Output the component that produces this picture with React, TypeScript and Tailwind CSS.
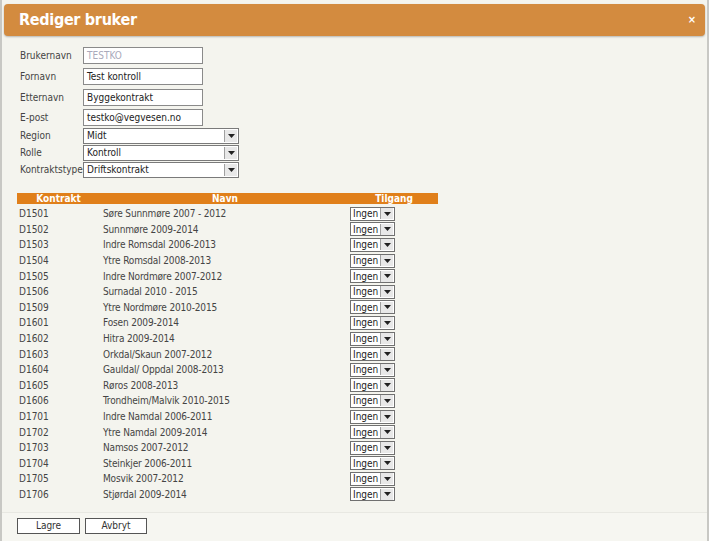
const rows: [string, string][] = [
  ["D1501", "Søre Sunnmøre 2007 - 2012"],
  ["D1502", "Sunnmøre 2009-2014"],
  ["D1503", "Indre Romsdal 2006-2013"],
  ["D1504", "Ytre Romsdal 2008-2013"],
  ["D1505", "Indre Nordmøre 2007-2012"],
  ["D1506", "Surnadal 2010 - 2015"],
  ["D1509", "Ytre Nordmøre 2010-2015"],
  ["D1601", "Fosen 2009-2014"],
  ["D1602", "Hitra 2009-2014"],
  ["D1603", "Orkdal/Skaun 2007-2012"],
  ["D1604", "Gauldal/ Oppdal 2008-2013"],
  ["D1605", "Røros 2008-2013"],
  ["D1606", "Trondheim/Malvik 2010-2015"],
  ["D1701", "Indre Namdal 2006-2011"],
  ["D1702", "Ytre Namdal 2009-2014"],
  ["D1703", "Namsos 2007-2012"],
  ["D1704", "Steinkjer 2006-2011"],
  ["D1705", "Mosvik 2007-2012"],
  ["D1706", "Stjørdal 2009-2014"],
];

const font = { fontFamily: '"DejaVu Sans Condensed", "DejaVu Sans", Verdana, sans-serif' };

function Arrow() {
  return (
    <span className="flex h-full w-[13px] items-center justify-center border-l border-[#a0a0a0] bg-[#e8e8e8]">
      <svg width="7" height="4" viewBox="0 0 7 4">
        <path d="M0 0h7L3.5 4z" fill="#222" />
      </svg>
    </span>
  );
}

function TextField({ value, muted }: { value: string; muted?: boolean }) {
  return (
    <div
      className={`flex h-[17px] w-[120px] items-center border border-[#8a8a8a] bg-white px-[3px] ${
        muted ? "text-[#aab]" : "text-[#222]"
      }`}
    >
      {value}
    </div>
  );
}

function SelectField({ value }: { value: string }) {
  return (
    <div className="flex h-[16px] w-[156px] items-center border border-[#7a7a7a] bg-white pl-[3px] pr-px">
      <span className="flex-1 text-[#222]">{value}</span>
      <span className="h-[12px]">
        <Arrow />
      </span>
    </div>
  );
}

function FormRow({ label, children, h }: { label: string; children: React.ReactNode; h: string }) {
  return (
    <div className={`flex items-center ${h}`}>
      <span className="w-[63px] text-[#444]">{label}</span>
      {children}
    </div>
  );
}

export default function App() {
  return (
    <div
      className="h-[541px] w-[709px] overflow-hidden border-x-2 border-[#c8c8c4] bg-[#f4f4ee] text-[10px] text-[#333]"
      style={font}
    >
      <div className="px-[2px] pt-[4px]">
        <div className="flex h-[32px] items-center justify-between rounded-[4px] bg-[#d38b3f] pl-[15px] pr-[9px] shadow-[0_1px_2px_rgba(0,0,0,0.25)]">
          <span className="text-[16px] font-bold tracking-[-0.3px] text-white">Rediger bruker</span>
          <span className="text-[11px] font-bold text-white">×</span>
        </div>
      </div>

      <div className="pl-[18px] pt-[9px]">
        <div className="flex flex-col">
          <FormRow label="Brukernavn" h="h-[21px]">
            <TextField value="TESTKO" muted />
          </FormRow>
          <FormRow label="Fornavn" h="h-[21px]">
            <TextField value="Test kontroll" />
          </FormRow>
          <FormRow label="Etternavn" h="h-[20px]">
            <TextField value="Byggekontrakt" />
          </FormRow>
          <FormRow label="E-post" h="h-[20px]">
            <TextField value="testko@vegvesen.no" />
          </FormRow>
          <FormRow label="Region" h="h-[17px]">
            <SelectField value="Midt" />
          </FormRow>
          <FormRow label="Rolle" h="h-[17px]">
            <SelectField value="Kontroll" />
          </FormRow>
          <FormRow label="Kontraktstype" h="h-[17px]">
            <SelectField value="Driftskontrakt" />
          </FormRow>
        </div>

        <table className="ml-[-3px] mt-[15px] w-[421px] border-collapse">
          <thead>
            <tr className="h-[11px] bg-[#e07f1a] text-[10px] font-bold leading-[11px] text-white">
              <th className="w-[83px] p-0 text-center">Kontrakt</th>
              <th className="w-[250px] p-0 text-center">Navn</th>
              <th className="p-0 text-center">Tilgang</th>
            </tr>
          </thead>
          <tbody>
            <tr className="h-[2px]">
              <td colSpan={3} />
            </tr>
            {rows.map(([code, name]) => (
              <tr key={code} className="h-[15.6px]">
                <td className="p-0 pl-[2px] text-[#444]">{code}</td>
                <td className="p-0 pl-[3px] tracking-[-0.15px] text-[#444]">{name}</td>
                <td className="p-0">
                  <div className="flex h-[14px] w-[45px] items-center border border-[#707070] bg-white pl-[2px] pr-px">
                    <span className="flex-1 text-[#222]">Ingen</span>
                    <span className="h-[11px]">
                      <Arrow />
                    </span>
                  </div>
                </td>
              </tr>
            ))}
          </tbody>
        </table>
      </div>

      <div className="mt-[10px] flex h-[40px] gap-[5px] border-t border-[#e8e8e2] bg-[#f6f6f1] pl-[15px] pt-[5px]">
        <button className="h-[16px] w-[63px] border border-[#555] bg-white text-[10px] leading-[14px] text-[#333]">
          Lagre
        </button>
        <button className="h-[16px] w-[62px] border border-[#555] bg-white text-[10px] leading-[14px] text-[#333]">
          Avbryt
        </button>
      </div>
    </div>
  );
}
